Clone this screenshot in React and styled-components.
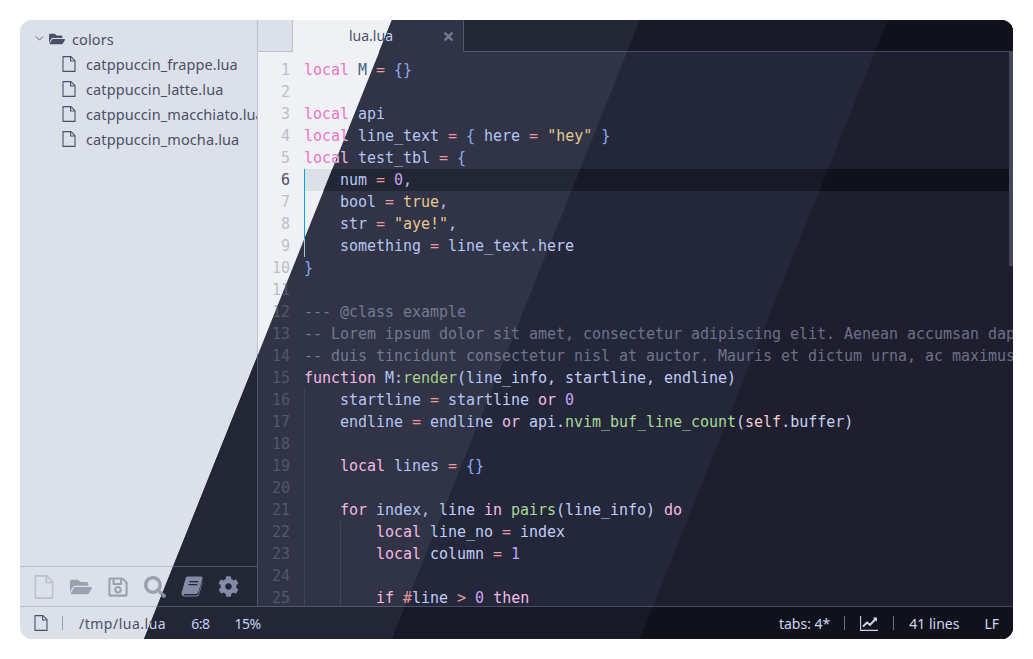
import React from 'react'
import styled, { createGlobalStyle, ThemeProvider } from 'styled-components'
import { FaCog, FaFolderOpen, FaRegSave, FaSearch, FaTimes } from 'react-icons/fa'
import { ChevronDown } from 'lucide-react'

const latte = {
  base: '#eff1f5', crust: '#dce0e8', text: '#4c4f69', code: '#4c5f85', comment: '#9ca0b0', icon: '#9ca0b0', line: '#bcc0cc', guide: '#ccd0da',
  number: '#bcc0cc', keyword: '#ea76cb', op: '#e64553', str: '#df8e1d', num: '#8839ef', fn: '#40a02b', brace: '#1e66f5', self: '#dd7878', sky: '#04a5e5',
}
const frappe = {
  base: '#303446', crust: '#232634', text: '#c6d0f5', code: '#b4c6f2', comment: '#737994', icon: '#838ba7', line: '#51576d', guide: '#414559',
  number: '#51576d', keyword: '#f4b8e4', op: '#ea999c', str: '#e5c890', num: '#ca9ee6', fn: '#a6d189', brace: '#8caaee', self: '#eebebe', sky: '#99d1db',
}
const macchiato = {
  base: '#24273a', crust: '#181926', text: '#cad3f5', code: '#c0cdf5', comment: '#6e738d', icon: '#8087a2', line: '#494d64', guide: '#363a4f',
  number: '#494d64', keyword: '#f5bde6', op: '#ee99a0', str: '#eed49f', num: '#c6a0f6', fn: '#a6da95', brace: '#8aadf4', self: '#f0c6c6', sky: '#91d7e3',
}
const mocha = {
  base: '#1e1e2e', crust: '#11111b', text: '#cdd6f4', code: '#c6d2f4', comment: '#6c7086', icon: '#7f849c', line: '#45475a', guide: '#313244',
  number: '#45475a', keyword: '#f5c2e7', op: '#eba0ac', str: '#f9e2af', num: '#cba6f7', fn: '#a6e3a1', brace: '#89b4fa', self: '#f2cdcd', sky: '#89dceb',
}

const files = ['catppuccin_frappe.lua', 'catppuccin_latte.lua', 'catppuccin_macchiato.lua', 'catppuccin_mocha.lua']

// each line: [indent level, text]
const code = [
  [0, 'local M = {}'],
  [0, ''],
  [0, 'local api'],
  [0, 'local line_text = { here = "hey" }'],
  [0, 'local test_tbl = {'],
  [1, 'num = 0,'],
  [1, 'bool = true,'],
  [1, 'str = "aye!",'],
  [1, 'something = line_text.here'],
  [0, '}'],
  [0, ''],
  [0, '--- @class example'],
  [0, '-- Lorem ipsum dolor sit amet, consectetur adipiscing elit. Aenean accumsan dapibus nibh'],
  [0, '-- duis tincidunt consectetur nisl at auctor. Mauris et dictum urna, ac maximus nibh sed'],
  [0, 'function M:render(line_info, startline, endline)'],
  [1, 'startline = startline or 0'],
  [1, 'endline = endline or api.nvim_buf_line_count(self.buffer)'],
  [1, ''],
  [1, 'local lines = {}'],
  [1, ''],
  [1, 'for index, line in pairs(line_info) do'],
  [2, 'local line_no = index'],
  [2, 'local column = 1'],
  [2, ''],
  [2, 'if #line > 0 then'],
]

const TOKENS = /(--.*$)|("[^"]*")|\b(local|function|for|in|do|if|then|or)\b|\b(true)\b|\b(self)\b|\b(\d+)\b|\b(render|pairs|nvim_buf_line_count)\b|([=>#])|([{}])/g
const KINDS = ['comment', 'str', 'keyword', 'str', 'self', 'num', 'fn', 'op', 'brace']

function highlight(text) {
  const parts = []
  let last = 0
  for (const m of text.matchAll(TOKENS)) {
    if (m.index > last) parts.push(text.slice(last, m.index))
    const kind = KINDS[m.slice(1).findIndex(Boolean)]
    parts.push(<Token key={m.index} $kind={kind}>{m[0]}</Token>)
    last = m.index + m[0].length
  }
  if (last < text.length) parts.push(text.slice(last))
  return parts
}

function FileOutline({ width, height }) {
  return (
    <svg width={width} height={height} viewBox="0 0 14 16" fill="none" stroke="currentColor" strokeWidth="1.1" strokeLinejoin="round" preserveAspectRatio="none">
      <path d="M1 .6h8l4 4v10.800H1z" />
      <path d="M8.600 .8v4.200h4.200" />
    </svg>
  )
}

function SlantedBook() {
  return (
    <svg width="22" height="21" viewBox="0 0 22 21" fill="currentColor">
      <path d="M6.200 .5h13.600c1.400 0 2.100 1 1.700 2.300l-4 12.900c-.5 1.500-1.500 2.200-3 2.200H3.700c-.7 0-1.200.4-.9 1 .2.400.7.600 1.300.6h11c1.200 0 2-.5 2.400-1.700l4-13v1.900l-3.400 11.600c-.4 1.500-1.600 2.200-3 2.200H3.800c-1.800 0-3.300-1.300-3.300-3 0-.6.100-1 .3-1.600L4.600 2.600C5 1.300 5.400.5 6.200.5Z" />
      <path d="M8.300 5.700h9M7.400 8.700h9" stroke="var(--book-line)" strokeWidth="1.300" fill="none" />
    </svg>
  )
}

function LineChart() {
  return (
    <svg width="18" height="16" viewBox="0 0 18 16" fill="none" stroke="currentColor">
      <path d="M.6 1v14.400H18" strokeWidth="1.100" />
      <path d="M3 11.500l4-4 3 2.400 6-6.400" strokeWidth="2" />
      <path d="M12.800 2.500H17v4.200z" fill="currentColor" strokeWidth="0" />
    </svg>
  )
}

function Layer() {
  return (
    <Frame>
      <Main>
        <Sidebar>
          <Tree>
            <FolderRow>
              <ChevronDown size={13} strokeWidth={1.6} />
              <FaFolderOpen size={16} />
              <FolderName>colors</FolderName>
            </FolderRow>
            {files.map((name) => (
              <FileRow key={name}>
                <FileOutline width={14} height={16} />
                <span>{name}</span>
              </FileRow>
            ))}
          </Tree>
          <Toolbar>
            <PageIcon><FileOutline width={20} height={24} /></PageIcon>
            <FaFolderOpen size={22} />
            <FaRegSave size={22} />
            <FaSearch size={22} />
            <SlantedBook />
            <FaCog size={21} />
          </Toolbar>
        </Sidebar>
        <Workspace>
          <TabBar>
            <TabStub />
            <Tab>
              <TabLabel>lua.lua</TabLabel>
              <CloseIcon><FaTimes size={13} /></CloseIcon>
            </Tab>
            <TabFill />
          </TabBar>
          <Editor>
            {code.map(([level, text], i) => (
              <Row key={i}>
                <Gutter $current={i === 5}>{i + 1}</Gutter>
                <Code $current={i === 5}>
                  {Array.from({ length: level }, (_, k) => (
                    <Indent key={k} $active={i >= 5 && i <= 8} />
                  ))}
                  {highlight(text)}
                </Code>
              </Row>
            ))}
            <Scrollbar />
          </Editor>
        </Workspace>
      </Main>
      <Status>
        <StatusIcon><FileOutline width={14} height={16} /></StatusIcon>
        <Sep $gap={14} />
        <PathText $gap={16}>/tmp/lua.lua</PathText>
        <NumberText $gap={25}>6:8</NumberText>
        <NumberText $gap={25}>15%</NumberText>
        <Spacer />
        <StatusText>tabs: 4*</StatusText>
        <Sep $gap={14} />
        <StatusIcon $gap={15}><LineChart /></StatusIcon>
        <Sep $gap={15} />
        <StatusText $gap={15}>41 lines</StatusText>
        <StatusText $gap={25}>LF</StatusText>
      </Status>
    </Frame>
  )
}

// every slice runs on to the right edge, so no seam of the page under it shows at a diagonal
const layers = [
  { theme: frappe, clip: '372px 0, 993px 0, 993px 619px, 124px 619px' },
  { theme: macchiato, clip: '620px 0, 993px 0, 993px 619px, 372px 619px' },
  { theme: mocha, clip: '868px 0, 993px 0, 993px 619px, 620px 619px' },
]

export default function App() {
  return (
    <>
      <GlobalStyle />
      <Stack>
        <ThemeProvider theme={latte}>
          <Layer />
        </ThemeProvider>
        {layers.map(({ theme, clip }) => (
          <ThemeProvider theme={theme} key={clip}>
            <Slice $clip={clip}>
              <Layer />
            </Slice>
          </ThemeProvider>
        ))}
      </Stack>
    </>
  )
}

const GlobalStyle = createGlobalStyle`
  body {
    margin: 0;
    padding: 20px;
    background: #fff;
    font-family: 'Noto Sans', sans-serif;
  }
`

const Stack = styled.div`
  position: relative;
  width: 993px;
  height: 619px;
  border-radius: 12px;
  overflow: hidden;
`

const Slice = styled.div`
  position: absolute;
  inset: 0;
  clip-path: polygon(${(p) => p.$clip});
`

const Frame = styled.div`
  display: flex;
  flex-direction: column;
  width: 993px;
  height: 619px;
  background: ${(p) => p.theme.base};
  color: ${(p) => p.theme.text};
  --book-line: ${(p) => p.theme.crust};
`

const Main = styled.div`
  display: flex;
  flex: 1;
  min-height: 0;
`

const Sidebar = styled.aside`
  display: flex;
  flex-direction: column;
  flex: none;
  box-sizing: border-box;
  width: 238px;
  background: ${(p) => p.theme.crust};
  border-right: 1px solid ${(p) => p.theme.line};
  overflow: hidden;
`

const Tree = styled.div`
  flex: 1;
  padding-top: 6px;
  font-size: 14.5px;
  letter-spacing: 0.1px;
  white-space: nowrap;
`

const FolderRow = styled.div`
  display: flex;
  align-items: center;
  height: 25px;
  padding-left: 13px;
  gap: 3px;
`

const FolderName = styled.span`
  margin-left: 4px;
`

const FileRow = styled.div`
  display: flex;
  align-items: center;
  gap: 10px;
  height: 25px;
  padding-left: 42px;

  svg {
    flex: none;
  }
`

const Toolbar = styled.div`
  display: grid;
  grid-auto-flow: column;
  grid-auto-columns: 37px;
  align-items: center;
  justify-items: center;
  justify-content: start;
  flex: none;
  height: 39px;
  padding-left: 5px;
  color: ${(p) => p.theme.icon};
  border-top: 1px solid ${(p) => p.theme.line};
`

const PageIcon = styled.span`
  display: flex;
  color: ${(p) => p.theme.line};
`

const Workspace = styled.div`
  display: flex;
  flex-direction: column;
  flex: 1;
  min-width: 0;
`

const TabBar = styled.div`
  display: flex;
  flex: none;
  height: 32px;
  background: ${(p) => p.theme.crust};
`

const TabStub = styled.div`
  flex: none;
  box-sizing: border-box;
  width: 35px;
  border-right: 1px solid ${(p) => p.theme.line};
  border-bottom: 1px solid ${(p) => p.theme.line};
`

const Tab = styled.div`
  display: flex;
  align-items: center;
  flex: none;
  width: 171px;
  padding-left: 56px;
  box-sizing: border-box;
  background: ${(p) => p.theme.base};
  border-right: 1px solid ${(p) => p.theme.line};
`

const TabLabel = styled.span`
  font-size: 14px;
  padding-bottom: 1px;
`

const CloseIcon = styled.span`
  display: flex;
  margin-left: 49px;
  color: ${(p) => p.theme.comment};
`

const TabFill = styled.div`
  flex: 1;
  border-bottom: 1px solid ${(p) => p.theme.line};
`

const Editor = styled.div`
  position: relative;
  flex: 1;
  min-height: 0;
  padding-top: 7px;
  overflow: hidden;
  font-family: 'DejaVu Sans Mono', monospace;
  font-size: 15px;
  letter-spacing: -0.03px;
  line-height: 22px;
  color: ${(p) => p.theme.code};
`

const Row = styled.div`
  display: flex;
  height: 22px;
`

const Gutter = styled.div`
  flex: none;
  width: 32px;
  padding-right: 14px;
  text-align: right;
  color: ${(p) => (p.$current ? p.theme.text : p.theme.number)};
`

const Code = styled.div`
  flex: 1;
  min-width: 0;
  margin-right: 4px;
  white-space: pre;
  background: ${(p) => (p.$current ? p.theme.crust : 'transparent')};
`

const Indent = styled.span`
  display: inline-block;
  box-sizing: border-box;
  width: 36px;
  height: 22px;
  vertical-align: top;
  border-left: 1px solid ${(p) => (p.$active ? p.theme.sky : p.theme.guide)};
`

const Token = styled.span`
  color: ${(p) => p.theme[p.$kind]};
`

const Scrollbar = styled.div`
  position: absolute;
  top: 0;
  right: 0;
  width: 4px;
  height: 214px;
  background: ${(p) => p.theme.line};
`

const Status = styled.footer`
  display: flex;
  align-items: center;
  flex: none;
  box-sizing: border-box;
  height: 33px;
  padding: 0 14px;
  font-size: 14px;
  background: ${(p) => p.theme.crust};
  border-top: 1px solid ${(p) => p.theme.line};
`

const StatusIcon = styled.span`
  display: flex;
  margin-left: ${(p) => p.$gap || 0}px;
`

const StatusText = styled.span`
  margin-left: ${(p) => p.$gap || 0}px;
`

const PathText = styled(StatusText)`
  letter-spacing: 0.5px;
`

const NumberText = styled(StatusText)`
  letter-spacing: -0.5px;
`

const Sep = styled.span`
  width: 1px;
  height: 14px;
  margin-left: ${(p) => p.$gap}px;
  background: ${(p) => p.theme.comment};
`

const Spacer = styled.div`
  flex: 1;
`
